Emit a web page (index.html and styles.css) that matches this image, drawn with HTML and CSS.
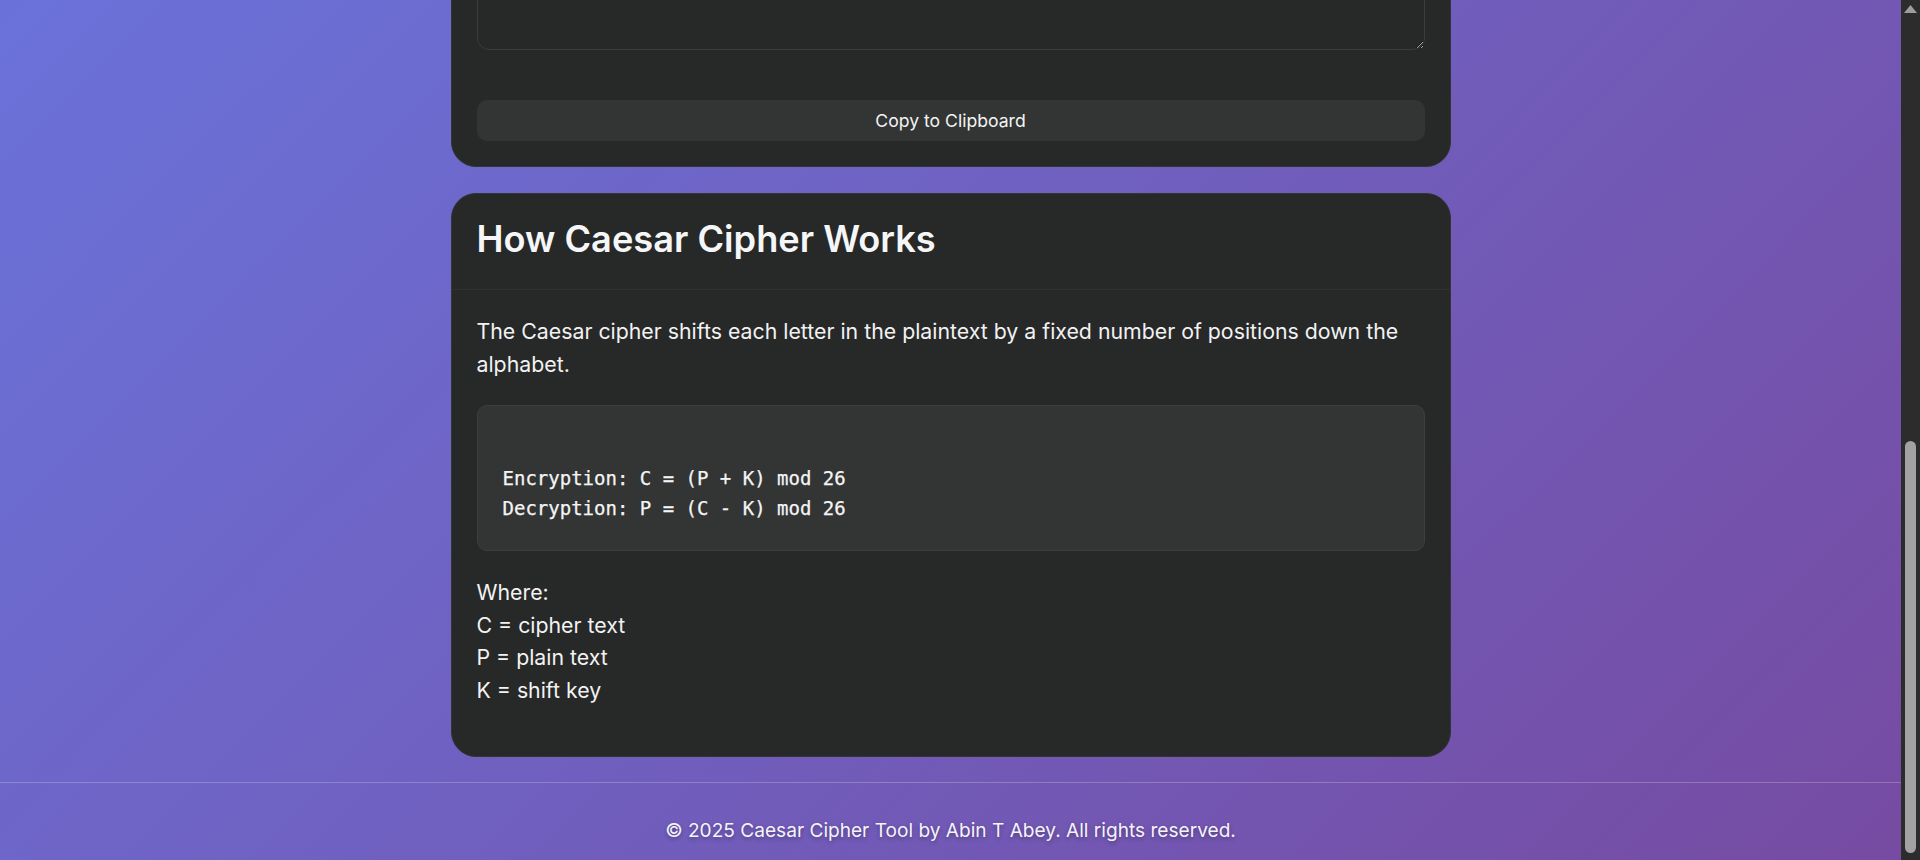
FILE: index.html
```html
<!DOCTYPE html>
<html lang="en">
<head>
<meta charset="utf-8">
<title>Caesar Cipher Tool</title>
<link rel="stylesheet" href="styles.css">
</head>
<body>
<div class="screen">
  <div class="viewport">
    <main class="container">
      <section class="card tool">
        <div class="card-body">
          <textarea id="output" class="text-box" rows="6" readonly aria-label="Result"></textarea>
          <button class="copy-btn" type="button">Copy to Clipboard</button>
        </div>
      </section>
      <section class="card info">
        <div class="card-header"><h2>How Caesar Cipher Works</h2></div>
        <div class="card-body">
          <p>The Caesar cipher shifts each letter in the plaintext by a fixed number of positions down the alphabet.</p>
          <pre class="formula">

Encryption: C = (P + K) mod 26
Decryption: P = (C - K) mod 26</pre>
          <p>Where:<br>C = cipher text<br>P = plain text<br>K = shift key</p>
        </div>
      </section>
    </main>
    <footer class="footer">
      <p>© 2025 Caesar Cipher Tool by Abin T Abey. All rights reserved.</p>
    </footer>
  </div>
  <div class="scrollbar" aria-hidden="true">
    <svg class="sb-arrow" width="13" height="8" viewBox="0 0 13 8"><polygon points="6.5,0 13,8 0,8" fill="#9d9d9d"/></svg>
    <span class="sb-thumb"></span>
  </div>
</div>
</body>
</html>
```
FILE: styles.css
```css
* { box-sizing: border-box; }

html, body {
  margin: 0;
  padding: 0;
  height: 100%;
  overflow: hidden;
}

body {
  font-family: Inter, "Liberation Sans", Arial, sans-serif;
  color: #f2f2f2;
  background: #2b2b2b;
}

.screen {
  display: flex;
  width: 1920px;
  height: 860px;
}

.viewport {
  flex: 1 1 auto;
  height: 860px;
  overflow: hidden;
  display: flex;
  flex-direction: column;
  justify-content: flex-end;
  background: linear-gradient(135deg, #6a72d9 0%, #764ba2 100%);
}

.container {
  flex-shrink: 0;
  width: 1000px;
  margin: 0 auto;
  display: flex;
  flex-direction: column;
  gap: 26px;
}

.card {
  flex-shrink: 0;
  background: #272828;
  border: 1px solid #333434;
  border-radius: 25px;
  overflow: hidden;
}

.card-header {
  padding: 24px 25px 29px;
  border-bottom: 1px solid #303131;
}

.card-header h2 {
  margin: 0;
  font-size: 36.2px;
  line-height: 42px;
  font-weight: 600;
  color: #f5f6f7;
}

.card-body {
  padding: 25px;
}

.tool .card-body {
  display: flex;
  flex-direction: column;
}

.text-box {
  color-scheme: dark;
  display: block;
  width: 100%;
  height: 200px;
  margin: 0 0 50px;
  padding: 15px;
  background: #272828;
  color: #f2f2f2;
  border: 1px solid #3b3c3c;
  border-radius: 12px;
  font-family: Inter, "Liberation Sans", Arial, sans-serif;
  font-size: 21.3px;
  resize: vertical;
}

.copy-btn {
  display: block;
  width: 100%;
  height: 41px;
  border: none;
  border-radius: 10px;
  background: #333434;
  color: #f4f4f4;
  font-family: Inter, "Liberation Sans", Arial, sans-serif;
  font-size: 17.6px;
  cursor: pointer;
}

.card-body p {
  margin: 0 0 25px;
  font-size: 21.3px;
  line-height: 32.5px;
  color: #f2f2f2;
}

.formula {
  margin: 0 0 25px;
  padding: 27px 25px;
  background: #333434;
  border: 1px solid #3d3e3e;
  border-radius: 10px;
  font-family: "DejaVu Sans Mono", "Liberation Mono", monospace;
  font-size: 19px;
  line-height: 30px;
  color: #f4f4f4;
  -webkit-text-stroke: 0.25px #f4f4f4;
  white-space: pre;
}

.footer {
  flex-shrink: 0;
  margin-top: 25px;
  border-top: 1px solid rgba(255, 255, 255, 0.22);
  padding: 31px 0 14px;
  text-align: center;
}

.footer p {
  margin: 0;
  font-size: 19.1px;
  line-height: 32px;
  color: rgba(255, 255, 255, 0.95);
  text-shadow: 0 2px 4px rgba(0, 0, 0, 0.3);
}

.scrollbar {
  flex: 0 0 19px;
  height: 860px;
  background: #2c2c2c;
  display: flex;
  flex-direction: column;
  align-items: center;
  justify-content: space-between;
}

.sb-arrow {
  display: block;
  margin-top: 5px;
}

.sb-thumb {
  display: block;
  width: 11px;
  height: 412px;
  margin-bottom: 7px;
  background: #a2a2a2;
  border-radius: 6px;
}
```
